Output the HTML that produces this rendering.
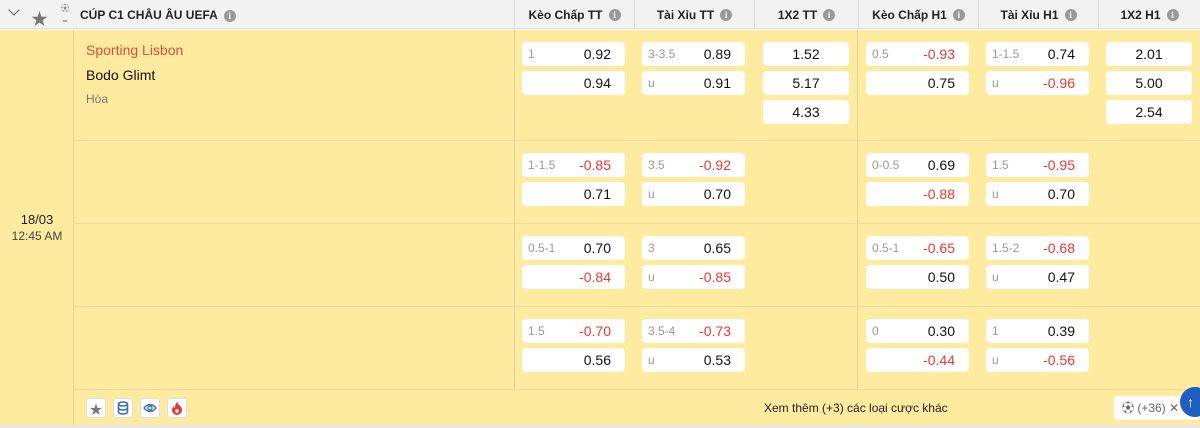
<!DOCTYPE html>
<html><head><meta charset="utf-8"><style>
*{margin:0;padding:0;box-sizing:border-box}
body{width:1200px;height:428px;overflow:hidden;background:#fff;font-family:"Liberation Sans","Noto Sans CJK SC",sans-serif;position:relative}
.a{position:absolute}
.hd{left:0;top:0;width:1200px;height:29px;background:#f2f2f2;border-bottom:1px solid #ddd}
.hc{top:0;height:29px;font-size:12px;font-weight:bold;color:#222;display:flex;align-items:center;justify-content:center;border-left:1px solid #ddd}
.i{display:inline-block;width:12px;height:12px;border-radius:50%;background:#999;color:#fff;font-size:9px;line-height:12px;text-align:center;margin-left:6px;font-weight:bold;font-family:"Liberation Serif",serif}
.y{left:0;top:30px;width:1200px;height:398px;background:#ffeba0}
.vl{width:1px;background:#e0d39a}
.hl{height:1px;background:#eadb9c}
.b{background:#fff;border-radius:4px;height:24px;font-size:14px;color:#111;display:flex;align-items:center;justify-content:flex-end;padding-right:14px}
.b span{position:absolute;left:6px;font-size:12px;color:#999}
.c{justify-content:center;padding:0}
.r{color:#e53935}
.ic{width:20px;height:20px;background:#fff;border:1px solid #ddd;border-radius:3px;top:398px;display:flex;align-items:center;justify-content:center}
</style></head><body>
<div class="a hd"></div>
<div class="a" style="left:10px;top:8px;width:8px;height:8px;border-right:1.5px solid #555;border-bottom:1.5px solid #555;transform:rotate(45deg);top:6px"></div>
<div class="a" style="left:31px;top:5px;font-size:17px;color:#777">★</div>
<div class="a" style="left:56px;top:4px;width:18px;height:20px;font-size:8px;color:#888;text-align:center;line-height:9px">⚽<br>‗</div>
<div class="a" style="left:80px;top:8px;font-size:12px;font-weight:bold;color:#222">CÚP C1 CHÂU ÂU UEFA<span class="i">i</span></div>
<div class="a hc" style="left:514px;width:120px">Kèo Chấp TT<span class="i">i</span></div>
<div class="a hc" style="left:634px;width:120px">Tài Xỉu TT<span class="i">i</span></div>
<div class="a hc" style="left:754px;width:104px">1X2 TT<span class="i">i</span></div>
<div class="a hc" style="left:858px;width:120px">Kèo Chấp H1<span class="i">i</span></div>
<div class="a hc" style="left:978px;width:120px">Tài Xỉu H1<span class="i">i</span></div>
<div class="a hc" style="left:1098px;width:102px">1X2 H1<span class="i">i</span></div>
<div class="a y"></div>
<div class="a vl" style="left:73px;top:30px;height:398px"></div>
<div class="a vl" style="left:514px;top:30px;height:360px"></div>
<div class="a vl" style="left:857px;top:30px;height:360px"></div>
<div class="a hl" style="left:74px;top:140px;width:1126px"></div>
<div class="a hl" style="left:74px;top:223px;width:1126px"></div>
<div class="a hl" style="left:74px;top:306px;width:1126px"></div>
<div class="a hl" style="left:74px;top:389px;width:1126px"></div>
<div class="a" style="left:0;top:425px;width:1200px;height:3px;background:#e8e8e8"></div>
<div class="a" style="left:0;top:212px;width:74px;text-align:center;font-size:13px;color:#222">18/03<div style="font-size:12px;color:#444;margin-top:2px">12:45 AM</div></div>
<div class="a" style="left:86px;top:42px;font-size:14px;color:#e04b3a">Sporting Lisbon</div>
<div class="a" style="left:86px;top:67px;font-size:14px;color:#111">Bodo Glimt</div>
<div class="a" style="left:86px;top:92px;font-size:12px;color:#777">Hòa</div>

<!-- row1 -->
<div class="a b" style="left:522px;top:42px;width:103px"><span>1</span>0.92</div>
<div class="a b" style="left:522px;top:71px;width:103px">0.94</div>
<div class="a b" style="left:642px;top:42px;width:103px"><span>3-3.5</span>0.89</div>
<div class="a b" style="left:642px;top:71px;width:103px"><span>u</span>0.91</div>
<div class="a b c" style="left:763px;top:42px;width:86px">1.52</div>
<div class="a b c" style="left:763px;top:71px;width:86px">5.17</div>
<div class="a b c" style="left:763px;top:100px;width:86px">4.33</div>
<div class="a b" style="left:866px;top:42px;width:103px"><span>0.5</span><i class="r" style="font-style:normal">-0.93</i></div>
<div class="a b" style="left:866px;top:71px;width:103px">0.75</div>
<div class="a b" style="left:986px;top:42px;width:103px"><span>1-1.5</span>0.74</div>
<div class="a b" style="left:986px;top:71px;width:103px"><span>u</span><i class="r" style="font-style:normal">-0.96</i></div>
<div class="a b c" style="left:1106px;top:42px;width:86px">2.01</div>
<div class="a b c" style="left:1106px;top:71px;width:86px">5.00</div>
<div class="a b c" style="left:1106px;top:100px;width:86px">2.54</div>
<!-- row2 -->
<div class="a b" style="left:522px;top:153px;width:103px"><span>1-1.5</span><i class="r" style="font-style:normal">-0.85</i></div>
<div class="a b" style="left:522px;top:182px;width:103px">0.71</div>
<div class="a b" style="left:642px;top:153px;width:103px"><span>3.5</span><i class="r" style="font-style:normal">-0.92</i></div>
<div class="a b" style="left:642px;top:182px;width:103px"><span>u</span>0.70</div>
<div class="a b" style="left:866px;top:153px;width:103px"><span>0-0.5</span>0.69</div>
<div class="a b" style="left:866px;top:182px;width:103px"><i class="r" style="font-style:normal">-0.88</i></div>
<div class="a b" style="left:986px;top:153px;width:103px"><span>1.5</span><i class="r" style="font-style:normal">-0.95</i></div>
<div class="a b" style="left:986px;top:182px;width:103px"><span>u</span>0.70</div>
<!-- row3 -->
<div class="a b" style="left:522px;top:236px;width:103px"><span>0.5-1</span>0.70</div>
<div class="a b" style="left:522px;top:265px;width:103px"><i class="r" style="font-style:normal">-0.84</i></div>
<div class="a b" style="left:642px;top:236px;width:103px"><span>3</span>0.65</div>
<div class="a b" style="left:642px;top:265px;width:103px"><span>u</span><i class="r" style="font-style:normal">-0.85</i></div>
<div class="a b" style="left:866px;top:236px;width:103px"><span>0.5-1</span><i class="r" style="font-style:normal">-0.65</i></div>
<div class="a b" style="left:866px;top:265px;width:103px">0.50</div>
<div class="a b" style="left:986px;top:236px;width:103px"><span>1.5-2</span><i class="r" style="font-style:normal">-0.68</i></div>
<div class="a b" style="left:986px;top:265px;width:103px"><span>u</span>0.47</div>
<!-- row4 -->
<div class="a b" style="left:522px;top:319px;width:103px"><span>1.5</span><i class="r" style="font-style:normal">-0.70</i></div>
<div class="a b" style="left:522px;top:348px;width:103px">0.56</div>
<div class="a b" style="left:642px;top:319px;width:103px"><span>3.5-4</span><i class="r" style="font-style:normal">-0.73</i></div>
<div class="a b" style="left:642px;top:348px;width:103px"><span>u</span>0.53</div>
<div class="a b" style="left:866px;top:319px;width:103px"><span>0</span>0.30</div>
<div class="a b" style="left:866px;top:348px;width:103px"><i class="r" style="font-style:normal">-0.44</i></div>
<div class="a b" style="left:986px;top:319px;width:103px"><span>1</span>0.39</div>
<div class="a b" style="left:986px;top:348px;width:103px"><span>u</span><i class="r" style="font-style:normal">-0.56</i></div>
<!-- footer -->
<div class="a ic" style="left:86px"><span style="color:#777;font-size:13px">★</span></div>
<div class="a ic" style="left:113px"><svg width="12" height="14" viewBox="0 0 12 14"><g fill="none" stroke="#3a6fb0" stroke-width="1.6"><ellipse cx="6" cy="3" rx="4.5" ry="2"/><path d="M1.5 3v8c0 1.1 2 2 4.5 2s4.5-.9 4.5-2V3M1.5 7c0 1.1 2 2 4.5 2s4.5-.9 4.5-2"/></g></svg></div>
<div class="a ic" style="left:140px"><svg width="14" height="10" viewBox="0 0 14 10"><path d="M1 5Q7-2 13 5Q7 12 1 5Z" fill="none" stroke="#3a6fb0" stroke-width="1.4"/><circle cx="7" cy="5" r="2" fill="none" stroke="#3a6fb0" stroke-width="1.4"/></svg></div>
<div class="a ic" style="left:167px"><svg width="12" height="14" viewBox="0 0 12 14"><path d="M6 1C7 4 11 5 11 9a5 5 0 0 1-10 0c0-2 1-3 2-4 0 2 1 2 1 2 0-3 1-5 2-6z" fill="#e53935"/><circle cx="6" cy="10" r="1.8" fill="#fff"/></svg></div>
<div class="a" style="left:764px;top:401px;font-size:12px;color:#222">Xem thêm (+3) các loại cược khác</div>
<div class="a" style="left:1114px;top:396px;width:86px;height:24px;background:#fff;border-radius:4px;font-size:12px;color:#666;line-height:24px;padding-left:8px">⚽ (+36) ✕</div>
<div class="a" style="left:1180px;top:387px;width:30px;height:30px;border-radius:50%;background:#1e5fbf;color:#fff;font-size:14px;line-height:30px;padding-left:7px;font-weight:bold">↑</div>
</body></html>
